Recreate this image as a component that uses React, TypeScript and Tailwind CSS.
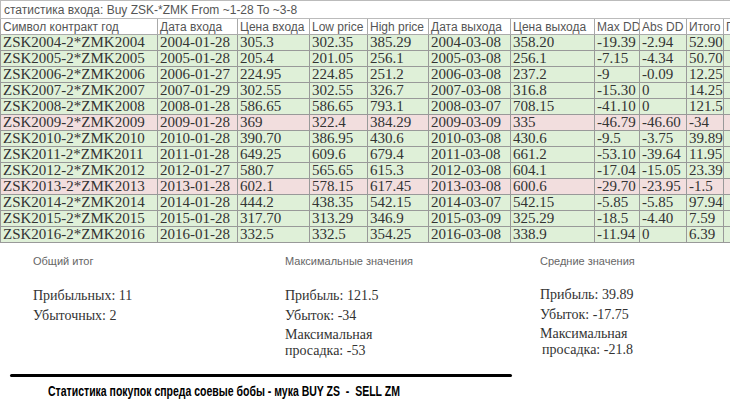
import React from 'react'

type Row = {
  sym: string
  d1: string
  p1: string
  lo: string
  hi: string
  d2: string
  p2: string
  mdd: string
  add: string
  tot: string
  loss?: boolean
}

const rows: Row[] = [
  { sym: 'ZSK2004-2*ZMK2004', d1: '2004-01-28', p1: '305.3', lo: '302.35', hi: '385.29', d2: '2004-03-08', p2: '358.20', mdd: '-19.39', add: '-2.94', tot: '52.90' },
  { sym: 'ZSK2005-2*ZMK2005', d1: '2005-01-28', p1: '205.4', lo: '201.05', hi: '256.1', d2: '2005-03-08', p2: '256.1', mdd: '-7.15', add: '-4.34', tot: '50.70' },
  { sym: 'ZSK2006-2*ZMK2006', d1: '2006-01-27', p1: '224.95', lo: '224.85', hi: '251.2', d2: '2006-03-08', p2: '237.2', mdd: '-9', add: '-0.09', tot: '12.25' },
  { sym: 'ZSK2007-2*ZMK2007', d1: '2007-01-29', p1: '302.55', lo: '302.55', hi: '326.7', d2: '2007-03-08', p2: '316.8', mdd: '-15.30', add: '0', tot: '14.25' },
  { sym: 'ZSK2008-2*ZMK2008', d1: '2008-01-28', p1: '586.65', lo: '586.65', hi: '793.1', d2: '2008-03-07', p2: '708.15', mdd: '-41.10', add: '0', tot: '121.5' },
  { sym: 'ZSK2009-2*ZMK2009', d1: '2009-01-28', p1: '369', lo: '322.4', hi: '384.29', d2: '2009-03-09', p2: '335', mdd: '-46.79', add: '-46.60', tot: '-34', loss: true },
  { sym: 'ZSK2010-2*ZMK2010', d1: '2010-01-28', p1: '390.70', lo: '386.95', hi: '430.6', d2: '2010-03-08', p2: '430.6', mdd: '-9.5', add: '-3.75', tot: '39.89' },
  { sym: 'ZSK2011-2*ZMK2011', d1: '2011-01-28', p1: '649.25', lo: '609.6', hi: '679.4', d2: '2011-03-08', p2: '661.2', mdd: '-53.10', add: '-39.64', tot: '11.95' },
  { sym: 'ZSK2012-2*ZMK2012', d1: '2012-01-27', p1: '580.7', lo: '565.65', hi: '615.3', d2: '2012-03-08', p2: '604.1', mdd: '-17.04', add: '-15.05', tot: '23.39' },
  { sym: 'ZSK2013-2*ZMK2013', d1: '2013-01-28', p1: '602.1', lo: '578.15', hi: '617.45', d2: '2013-03-08', p2: '600.6', mdd: '-29.70', add: '-23.95', tot: '-1.5', loss: true },
  { sym: 'ZSK2014-2*ZMK2014', d1: '2014-01-28', p1: '444.2', lo: '438.35', hi: '542.15', d2: '2014-03-07', p2: '542.15', mdd: '-5.85', add: '-5.85', tot: '97.94' },
  { sym: 'ZSK2015-2*ZMK2015', d1: '2015-01-28', p1: '317.70', lo: '313.29', hi: '346.9', d2: '2015-03-09', p2: '325.29', mdd: '-18.5', add: '-4.40', tot: '7.59' },
  { sym: 'ZSK2016-2*ZMK2016', d1: '2016-01-28', p1: '332.5', lo: '332.5', hi: '354.25', d2: '2016-03-08', p2: '338.9', mdd: '-11.94', add: '0', tot: '6.39' },
]

const heads = ['Символ контракт год', 'Дата входа', 'Цена входа', 'Low price', 'High price', 'Дата выхода', 'Цена выхода', 'Max DD', 'Abs DD', 'Итого', 'Профит']
const widths = [157, 80, 72, 58, 61, 82, 84, 45, 47, 37, 60]

const serif = "font-['Liberation_Serif',Georgia,serif]"
const sans = "font-['Liberation_Sans',Arial,sans-serif]"

function Stat({ children, className = '' }: { children: React.ReactNode; className?: string }) {
  return <div className={`${serif} text-[14px] text-[#333] ${className}`}>{children}</div>
}

export default function App() {
  return (
    <div className="w-[730px] h-[408px] overflow-hidden bg-white">
      <div className="w-[783px]">
        <table className="border-collapse table-fixed w-[783px]">
          <colgroup>
            {widths.map((w, i) => (
              <col key={i} style={{ width: w }} />
            ))}
          </colgroup>
          <tbody>
            <tr className="h-[18px]">
              <td colSpan={11} className={`${sans} border border-[#bbb] px-[3px] text-[12px] leading-[16px] text-[#555]`}>
                статистика входа: Buy ZSK-*ZMK From ~1-28 To ~3-8
              </td>
            </tr>
            <tr className="h-[16px]">
              {heads.map((h, i) => (
                <td key={i} className={`${sans} border border-[#aaa] px-[2px] text-[12px] leading-[14px] text-[#555] whitespace-nowrap overflow-hidden`}>
                  {h}
                </td>
              ))}
            </tr>
            {rows.map(r => (
              <tr key={r.sym} className={`h-[16px] ${r.loss ? 'bg-[#f2dede]' : 'bg-[#dff0d8]'}`}>
                {[r.sym, r.d1, r.p1, r.lo, r.hi, r.d2, r.p2, r.mdd, r.add, r.tot, ''].map((v, i) => (
                  <td key={i} className={`${serif} border border-[#999] pl-[2px] pr-0 text-[15px] leading-[15px] text-[#333] whitespace-nowrap overflow-hidden`}>
                    {v}
                  </td>
                ))}
              </tr>
            ))}
          </tbody>
        </table>
      </div>

      <div className="grid grid-cols-[285px_255px_190px] mt-[11px]">
        <div className="pl-[33px]">
          <div className={`${sans} text-[11px] text-[#666] leading-[14px]`}>Общий итог</div>
          <div className="mt-[19px] flex flex-col gap-[3px]">
            <Stat className="leading-[17px]">Прибыльных: 11</Stat>
            <Stat className="leading-[17px]">Убыточных: 2</Stat>
          </div>
        </div>
        <div>
          <div className={`${sans} text-[11px] text-[#666] leading-[14px]`}>Максимальные значения</div>
          <div className="mt-[19px] flex flex-col gap-[3px]">
            <Stat className="leading-[17px]">Прибыль: 121.5</Stat>
            <Stat className="leading-[17px]">Убыток: -34</Stat>
            <Stat className="leading-[16px] w-[100px]">Максимальная просадка: -53</Stat>
          </div>
        </div>
        <div>
          <div className={`${sans} text-[11px] text-[#666] leading-[14px]`}>Средние значения</div>
          <div className="mt-[18px] flex flex-col gap-[3px]">
            <Stat className="leading-[17px]">Прибыль: 39.89</Stat>
            <Stat className="leading-[17px]">Убыток: -17.75</Stat>
            <Stat className="leading-[16px]">Максимальная</Stat>
            <Stat className="leading-[16px] -mt-[3px] pl-[2px]">просадка: -21.8</Stat>
          </div>
        </div>
      </div>

      <div className="mt-[15px] ml-[10px] w-[502px] h-[3px] rounded-full bg-black" />
      <div className="mt-[6px] ml-[48px] w-fit origin-left scale-x-[0.75] font-['Liberation_Sans',Arial,sans-serif] font-bold text-[14px] leading-[16px] text-black whitespace-pre">
        {'Статистика покупок спреда соевые бобы - мука BUY ZS  -  SELL ZM'}
      </div>
    </div>
  )
}
